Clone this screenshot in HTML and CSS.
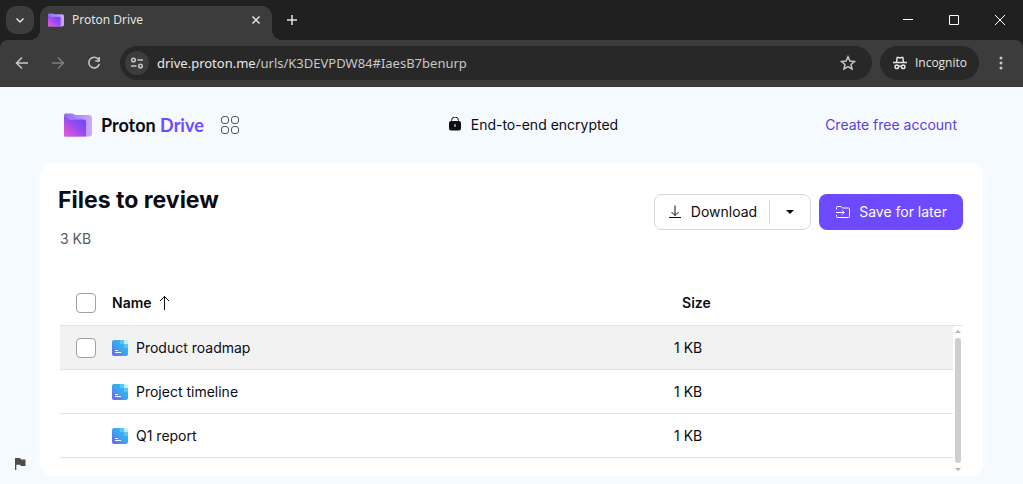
FILE: index.html
```html
<!DOCTYPE html>
<html lang="en">
<head>
    <meta charset="UTF-8">
    <meta name="viewport" content="width=device-width, initial-scale=1.0">
    <title>Proton Drive</title>
    <link rel="stylesheet" href="styles.css">
</head>
<body>
    <!-- shared gradients and icons -->
    <svg class="defs" width="0" height="0" aria-hidden="true">
        <defs>
            <linearGradient id="folder-back" x1="0" y1="0" x2="1" y2="0">
                <stop offset="0" stop-color="#8a6cf5"/>
                <stop offset="1" stop-color="#cfa8ff"/>
            </linearGradient>
            <linearGradient id="folder-front" x1="1" y1="0" x2="0" y2="1">
                <stop offset="0.1" stop-color="#6a45fb"/>
                <stop offset="0.5" stop-color="#9a4cf0"/>
                <stop offset="1" stop-color="#f05bd0"/>
            </linearGradient>
            <linearGradient id="doc-fill" x1="1" y1="0" x2="0" y2="1">
                <stop offset="0" stop-color="#34c3e6"/>
                <stop offset="0.55" stop-color="#3fa0f5"/>
                <stop offset="1" stop-color="#6d5cf5"/>
            </linearGradient>
        </defs>
        <symbol id="folder" viewBox="0 0 28 24">
            <path fill="url(#folder-back)" d="M0 2.5C0 1 1 0.5 2.500 0.500h5c1.200 0 2 .3 3 1l1 .6h13.500a3 3 0 0 1 3 3V20.500a3 3 0 0 1-3 3H0z"/>
            <path fill="url(#folder-front)" d="M0 3.500l5.500 3.200c1 .5 1.800.6 3 .2l1.500-.5h9.500a2.500 2.500 0 0 1 2.500 2.500V23.500H2.500a2.500 2.500 0 0 1-2.500-2.500z"/>
        </symbol>
        <symbol id="doc" viewBox="0 0 16 16">
            <path fill="url(#doc-fill)" d="M2 0h6v4h4v4h4v6a2 2 0 0 1-2 2H2a2 2 0 0 1-2-2V2a2 2 0 0 1 2-2z"/>
            <path fill="#5bc6ee" d="M8 0h4v4H8zM12 4h4v4h-4z"/>
            <path fill="#c4ecf8" d="M12 0h2a2 2 0 0 1 2 2v2h-4z"/>
            <path fill="#fff" d="M3 10h3v1H3zM3 12h6v1H3z"/>
        </symbol>
    </svg>

    <div class="browser">
        <div class="tabs">
            <button class="tab-search" aria-label="Search tabs">
                <svg width="12" height="12" viewBox="0 0 12 12"><path d="M2.500 4.500L6 8l3.500-3.500"/></svg>
            </button>
            <div class="tab">
                <svg class="fill" width="16" height="14"><use href="#folder"/></svg>
                <span class="tab-title">Proton Drive</span>
                <button aria-label="Close tab">
                    <svg width="12" height="12" viewBox="0 0 12 12"><path d="M2.500 2.500l7 7M9.500 2.500l-7 7"/></svg>
                </button>
            </div>
            <button class="new-tab" aria-label="New tab">
                <svg width="12" height="12" viewBox="0 0 12 12"><path d="M6 1v10M1 6h10"/></svg>
            </button>
            <div class="window-buttons">
                <button aria-label="Minimize"><svg width="12" height="12" viewBox="0 0 12 12"><path d="M1 5.500h10"/></svg></button>
                <button aria-label="Maximize"><svg width="12" height="12" viewBox="0 0 12 12"><path d="M1.500 1.500h9v9h-9z"/></svg></button>
                <button aria-label="Close"><svg width="12" height="12" viewBox="0 0 12 12"><path d="M1 1l10 10M11 1L1 11"/></svg></button>
            </div>
        </div>

        <div class="toolbar">
            <button class="nav" aria-label="Back">
                <svg width="16" height="16" viewBox="0 0 16 16"><path d="M14 8H3M8 2.500L2.500 8 8 13.500"/></svg>
            </button>
            <button class="nav off" aria-label="Forward">
                <svg width="16" height="16" viewBox="0 0 16 16"><path d="M2 8h11M8 2.500L13.500 8 8 13.500"/></svg>
            </button>
            <button class="nav" aria-label="Reload">
                <svg width="16" height="16" viewBox="0 0 16 16"><path d="M12.500 4.500A5.300 5.300 0 1 0 13.300 9M13.200 2v4H9.200"/></svg>
            </button>
            <div class="address">
                <button class="site-info" aria-label="Site information">
                    <svg width="14" height="14" viewBox="0 0 14 14"><circle cx="3.500" cy="4" r="1.800"/><path d="M7.500 4H13M1 10h5.500"/><circle cx="10.500" cy="10" r="1.800"/></svg>
                </button>
                <span class="url"><b>drive.proton.me</b>/urls/K3DEVPDW84#IaesB7benurp</span>
                <button aria-label="Bookmark">
                    <svg width="16" height="16" viewBox="0 0 16 16"><path d="M8 1.800l1.900 4.200 4.600.5-3.500 3 1 4.500L8 11.700 4 14l1-4.500-3.500-3 4.600-.5z"/></svg>
                </button>
            </div>
            <div class="incognito">
                <svg width="16" height="16" viewBox="0 0 16 16"><path d="M1 7.500h14M4.500 7l.7-4.500h1.300l1.500.5 1.500-.5h1.300L11.500 7M6.500 11.500q1.500-1 3 0"/><circle cx="4.800" cy="11.800" r="1.800"/><circle cx="11.200" cy="11.800" r="1.800"/></svg>
                <span>Incognito</span>
            </div>
            <button class="menu" aria-label="Menu">
                <svg class="fill" width="4" height="14" viewBox="0 0 4 14"><circle cx="2" cy="2" r="1.500"/><circle cx="2" cy="7" r="1.500"/><circle cx="2" cy="12" r="1.500"/></svg>
            </button>
        </div>
    </div>

    <div class="page">
        <header class="top">
            <div class="brand">
                <a class="logo" href="#">
                    <svg width="28" height="24"><use href="#folder"/></svg>
                    <span>Proton <em>Drive</em></span>
                </a>
                <button aria-label="Proton apps">
                    <svg class="apps" width="20" height="20" viewBox="0 0 20 20"><rect x="1.500" y="1.500" width="7" height="7" rx="2.500"/><rect x="11.500" y="1.500" width="7" height="7" rx="2.500"/><rect x="1.500" y="11.500" width="7" height="7" rx="2.500"/><rect x="11.500" y="11.500" width="7" height="7" rx="2.500"/></svg>
                </button>
            </div>
            <div class="secure">
                <svg width="16" height="16" viewBox="0 0 16 16"><path fill="none" stroke="#0c0c14" d="M4.500 5V3.500a3.500 3.500 0 0 1 7 0V5"/><path fill="#0c0c14" fill-rule="evenodd" d="M4 4h8a2 2 0 0 1 2 2v5.500a2 2 0 0 1-2 2H4a2 2 0 0 1-2-2V6a2 2 0 0 1 2-2zM7.500 7v3h1V7z"/></svg>
                <span>End-to-end encrypted</span>
            </div>
            <a class="signup" href="#">Create free account</a>
        </header>

        <main class="card">
            <div class="card-head">
                <div class="card-title">
                    <h1>Files to review</h1>
                    <p>3 KB</p>
                </div>
                <div class="actions">
                    <div class="download">
                        <button class="download-main">
                            <svg width="16" height="16" viewBox="0 0 16 16"><path d="M8 1.500v10M4.500 8L8 11.500 11.500 8M2 13.500h12"/></svg>
                            Download
                        </button>
                        <button class="download-more" aria-label="More download options">
                            <svg class="fill" width="8" height="4" viewBox="0 0 8 4"><path d="M0 0h8L4 4z"/></svg>
                        </button>
                    </div>
                    <button class="save">
                        <svg width="16" height="16" viewBox="0 0 16 16"><path d="M1.500 5.500V3.500a1 1 0 0 1 1-1h3.500l1.500 1.500h6a1 1 0 0 1 1 1v7.500a1 1 0 0 1-1 1h-11a1 1 0 0 1-1-1V11M1 8.500h8M7 6.300l2.200 2.200L7 10.700"/></svg>
                        Save for later
                    </button>
                </div>
            </div>

            <div class="files">
                <table>
                    <thead>
                        <tr>
                            <th class="check"><input type="checkbox" aria-label="Select all"></th>
                            <th>
                                <span class="sort">Name
                                    <svg width="16" height="16" viewBox="0 0 16 16"><path d="M8.500 15V1.500M4 6l4.500-4.500L13 6"/></svg>
                                </span>
                            </th>
                            <th class="size">Size</th>
                        </tr>
                    </thead>
                    <tbody>
                        <tr class="active">
                            <td class="check"><input type="checkbox" aria-label="Select Product roadmap"></td>
                            <td><span class="file"><svg width="16" height="16"><use href="#doc"/></svg>Product roadmap</span></td>
                            <td class="size">1 KB</td>
                        </tr>
                        <tr>
                            <td class="check"></td>
                            <td><span class="file"><svg width="16" height="16"><use href="#doc"/></svg>Project timeline</span></td>
                            <td class="size">1 KB</td>
                        </tr>
                        <tr>
                            <td class="check"></td>
                            <td><span class="file"><svg width="16" height="16"><use href="#doc"/></svg>Q1 report</span></td>
                            <td class="size">1 KB</td>
                        </tr>
                    </tbody>
                </table>
                <div class="scrollbar">
                    <svg width="6" height="3" viewBox="0 0 6 3"><path d="M0 3h6L3 0z"/></svg>
                    <div class="thumb"></div>
                    <svg width="6" height="3" viewBox="0 0 6 3"><path d="M0 0h6L3 3z"/></svg>
                </div>
            </div>
        </main>

        <button class="report" aria-label="Report abuse">
            <svg width="12" height="12" viewBox="0 0 12 12"><path d="M1 0h5l1 1.500h4.500V8H7L6 6.800H2.300V12H1z"/></svg>
        </button>
    </div>
</body>
</html>
```

FILE: styles.css
```css
*{
    margin: 0;
    padding: 0;
    box-sizing: border-box;
}
body{
    min-height: 100vh;
    background-color: #f5faff;
    font-family: Inter, "Liberation Sans", sans-serif;
    font-size: 14px;
    line-height: 20px;
    color: #0c0c14;
}
button{
    display: flex;
    align-items: center;
    justify-content: center;
    border: 0;
    background: none;
    font: inherit;
    color: inherit;
    cursor: pointer;
}
a{
    text-decoration: none;
}
svg{
    display: block;
    flex: none;
}
.defs{
    position: absolute;
}

/* browser frame */
.browser{
    background-color: #202020;
    font-family: "Noto Sans", "Open Sans", sans-serif;
    color: #e3e3e3;
}
.browser svg{
    fill: none;
    stroke: currentColor;
    stroke-width: 1.5;
}
.browser svg.fill{
    fill: currentColor;
    stroke: none;
}
.tabs{
    display: flex;
    align-items: center;
    height: 40px;
    padding-left: 6px;
}
.tab-search{
    width: 28px;
    height: 28px;
    border-radius: 10px;
    background-color: #3c3c3c;
}
.tab{
    position: relative;
    display: flex;
    align-items: center;
    align-self: flex-end;
    gap: 8px;
    width: 232px;
    height: 34px;
    margin-left: 6px;
    padding: 0 10px 6px 8px;
    border-radius: 10px 10px 0 0;
    background-color: #3c3c3c;
}
/* curved feet of the open tab */
.tab::before,.tab::after{
    content: "";
    position: absolute;
    bottom: 0;
    width: 10px;
    height: 10px;
}
.tab::before{
    left: -10px;
    background: radial-gradient(circle at 0 0, transparent 10px, #3c3c3c 10px);
}
.tab::after{
    right: -10px;
    background: radial-gradient(circle at 100% 0, transparent 10px, #3c3c3c 10px);
}
.tab-title{
    flex: 1;
    font-size: 12px;
}
.new-tab{
    width: 28px;
    height: 28px;
    margin-left: 6px;
}
.window-buttons{
    display: flex;
    margin-left: auto;
}
.window-buttons button{
    width: 46px;
    height: 40px;
    color: #fff;
}
.window-buttons svg{
    stroke-width: 1;
}
.toolbar{
    display: flex;
    align-items: center;
    gap: 8px;
    height: 47px;
    padding: 0 8px 1px;
    border-radius: 8px 8px 0 0;
    background-color: #3c3c3c;
}
.nav{
    width: 28px;
    height: 28px;
    color: #c7c7c7;
}
.nav.off{
    color: #7d7d7d;
}
.address,.incognito{
    display: flex;
    align-items: center;
    height: 34px;
    border-radius: 17px;
    background-color: #282828;
}
.address{
    flex: 1;
    gap: 8px;
    margin-left: 4px;
    padding: 0 16px 0 5px;
    color: #c7c7c7;
}
.site-info{
    width: 24px;
    height: 24px;
    border-radius: 50%;
    background-color: #3c3c3c;
}
.url{
    flex: 1;
    font-size: 13px;
}
.url b{
    font-weight: normal;
    color: #e8e8e8;
}
.incognito{
    gap: 7px;
    padding: 0 12px;
    font-family: "Open Sans", "Noto Sans", sans-serif;
    font-size: 12px;
}
.menu{
    width: 28px;
    height: 28px;
    color: #c7c7c7;
}

/* page */
.top{
    display: flex;
    align-items: center;
    justify-content: space-between;
    height: 76px;
    padding: 0 66px 0 64px;
}
.brand,.logo,.secure{
    display: flex;
    align-items: center;
}
.brand{
    gap: 16px;
}
.logo{
    gap: 9px;
    font-family: Lato, Inter, sans-serif;
    font-size: 18px;
    font-weight: 700;
    color: #0c0c14;
}
.logo em{
    font-style: normal;
    color: #6d4aff;
}
.apps{
    fill: none;
    stroke: #55555c;
}
.secure{
    gap: 8px;
}
.signup{
    color: #5b3ee0;
}
.card{
    margin: 0 40px;
    padding: 18px 0;
    border-radius: 12px;
    background-color: #fff;
}
.card-head{
    display: flex;
    align-items: flex-start;
    justify-content: space-between;
    padding: 0 20px 0 18px;
}
h1{
    font-size: 23px;
    font-weight: 700;
    line-height: 38px;
}
.card-title p{
    margin-top: 10px;
    padding-left: 2px;
    color: #5c5958;
}
.actions{
    display: flex;
    gap: 8px;
    height: 36px;
    margin-top: 13px;
}
.actions svg{
    fill: none;
    stroke: currentColor;
}
.actions svg.fill{
    fill: currentColor;
    stroke: none;
}
.download{
    display: flex;
    align-items: center;
    border: 1px solid #d9d8d7;
    border-radius: 8px;
}
.download-main{
    gap: 8px;
    padding: 0 12px;
}
.download-more{
    width: 41px;
    height: 24px;
    border-left: 1px solid #d9d8d7;
}
.save{
    gap: 8px;
    padding: 0 16px;
    border-radius: 8px;
    background-color: #6d4aff;
    color: #fff;
}
.files{
    position: relative;
    margin: 32px 20px 0;
}
table{
    width: 100%;
    border-collapse: separate;
    border-spacing: 0;
    text-align: left;
}
th,td{
    height: 44px;
    border-bottom: 1px solid #e4e3e3;
}
th{
    height: 45px;
    font-weight: 600;
}
.check{
    width: 52px;
    padding-left: 16px;
}
.size{
    width: 32%;
}
th.size{
    padding-left: 8px;
}
.sort,.file{
    display: flex;
    align-items: center;
    gap: 8px;
}
.sort{
    gap: 4px;
}
.sort svg{
    fill: none;
    stroke: #0c0c14;
}
.active td{
    background-color: #f2f2f2;
}
input[type="checkbox"]{
    display: block;
    appearance: none;
    width: 20px;
    height: 20px;
    border: 1px solid #a3a19f;
    border-radius: 4px;
    background-color: #fff;
}
/* lies over the right end of the rows and runs a little past them */
.scrollbar{
    position: absolute;
    top: 45px;
    right: 0;
    bottom: -17px;
    display: flex;
    flex-direction: column;
    align-items: center;
    gap: 5px;
    width: 10px;
    padding: 4px 0;
    background-color: #fff;
    fill: #b5b3b3;
}
.thumb{
    flex: 1;
    width: 6px;
    border-radius: 3px;
    background-color: #cfcdcd;
}
.report{
    position: fixed;
    left: 14px;
    bottom: 14px;
    fill: #4f4d4b;
}
```
